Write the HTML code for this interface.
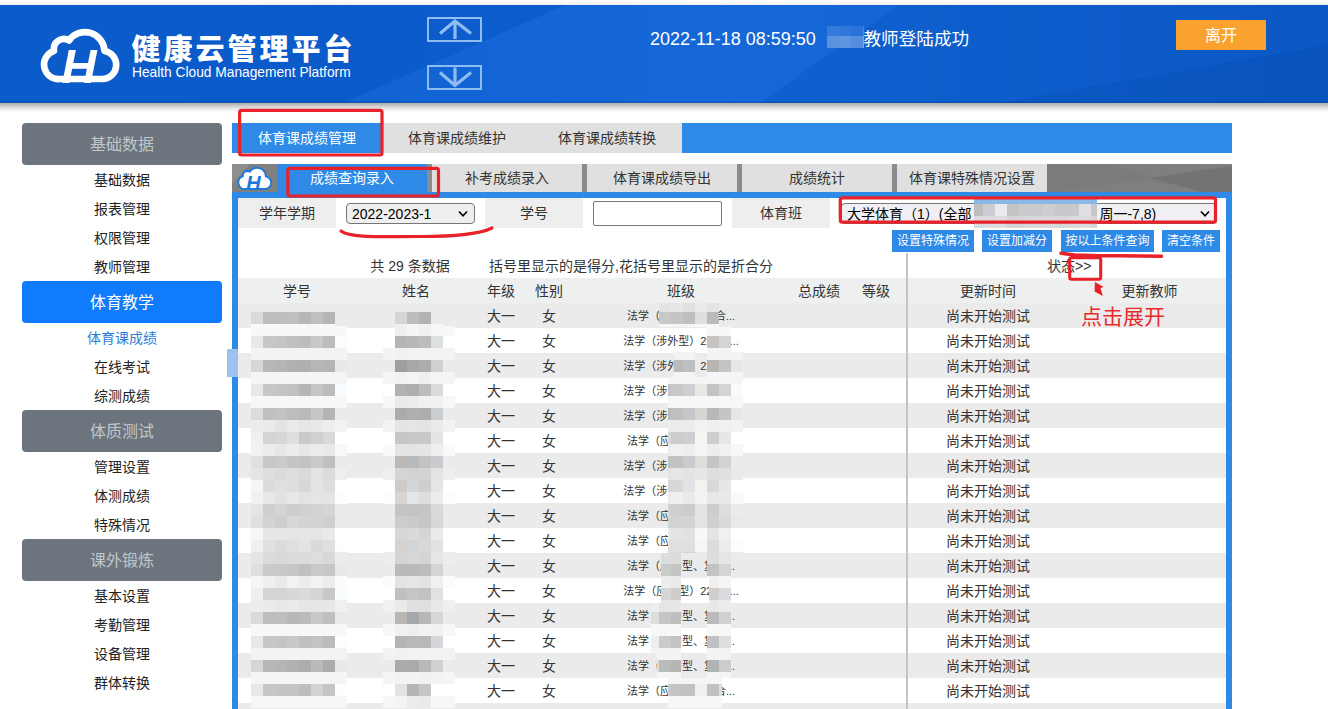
<!DOCTYPE html>
<html lang="zh-CN"><head><meta charset="utf-8"><title>健康云管理平台</title>
<style>
html,body{margin:0;padding:0;background:#fff}
body{width:1328px;height:709px;overflow:hidden;position:relative;font-family:"Liberation Sans","Noto Sans CJK SC",sans-serif;font-size:14px;color:#333;line-height:1}
.abs{position:absolute}
#hdr{position:absolute;left:-12px;top:5px;width:1352px;padding:0;height:98px;background:linear-gradient(90deg,#0e5ecf 0%,#0d5ccc 25.5%,#1466d6 55%,#0f5fce 80%,#0a55c2 100%);box-shadow:0 3px 7px rgba(0,0,0,.4),inset 0 -1.5px 0 #0a4ea6;overflow:hidden}
#hin{position:absolute;left:12px;top:0;width:1328px;height:98px}
#hdr svg.bg{position:absolute;left:0;top:0}
#logo{position:absolute;left:0;top:0}
#title{position:absolute;left:131.5px;top:28px;font-size:29px;font-weight:900;letter-spacing:3px;color:#fff;white-space:nowrap;line-height:34px}
#sub{position:absolute;left:132px;top:59px;font-size:13.75px;color:#fff;white-space:nowrap;line-height:18px}
.arrow{position:absolute;left:427px;width:51px;height:21px;border:2px solid #8fbdf3}
#msg{position:absolute;left:650px;top:22px;font-size:17.6px;color:#fff;white-space:nowrap;line-height:24px}
#leave{position:absolute;left:1176px;top:15px;width:90px;height:30px;background:#fba12f;color:#fff;font-size:16px;text-align:center;line-height:31px;overflow:hidden}
/* sidebar */
.sb{position:absolute;left:22px;width:200px;height:42px;border-radius:4px;background:#6c757d;color:#c2c6ca;font-size:16px;text-align:center;line-height:44px;overflow:hidden}
.sb.on{background:#107bfd;color:#fff}
.si{position:absolute;left:22px;width:200px;height:29px;text-align:center;line-height:31px;overflow:hidden;font-size:14px;color:#222}
.si.on{color:#2f7bd9}
/* tabs */
#t1{position:absolute;left:232px;top:123px;width:1000px;height:30px;background:#2e8ae6}
#t1 div{position:absolute;top:0;height:30px;width:150px;text-align:center;line-height:30px;font-size:14px;color:#333;background:#e0e0e0}
#t1 div.on{background:#2e8ae6;color:#fff}
#t2{position:absolute;left:232px;top:164px;width:1000px;height:29px;background:#777}
#t2 div.t{position:absolute;top:0;height:29px;width:150px;text-align:center;line-height:29px;font-size:14px;color:#333;background:#e0e0e0;border-right:5px solid #8c8c8c}
#t2 div.t.on{background:#2e8ae6;color:#fff}
#frame{position:absolute;left:232px;top:192px;width:988px;height:600px;border:6px solid #2e8ae6;border-top-width:6px;background:#fff}
.fl{position:absolute;top:198px;height:30px;background:#eee;text-align:center;line-height:30px;font-size:14px;color:#333}
.sel{position:absolute;box-sizing:border-box;border:1px solid #767676;border-radius:4px;background:#efefef;font-size:14px;color:#000;white-space:nowrap;overflow:hidden}
.btn{position:absolute;top:230px;height:22px;background:#2e8ae6;color:#fff;font-size:12px;text-align:center;line-height:22px;white-space:nowrap}
.row{position:absolute;left:238px;width:988px;height:25px}
.row.g{background:#ebebeb}
.row.h{background:#eeefef}
.row.h span{line-height:27px}
.row.d span{line-height:27px;overflow:hidden}
.row span{position:absolute;top:0;height:25px;line-height:25px;text-align:center;white-space:nowrap;font-size:14px;color:#333}
.row span.c{font-size:11px;overflow:hidden}
#vline{position:absolute;left:906px;top:253px;width:2px;height:460px;background:#c4c4c4}
</style></head><body>
<div id="hdr"><div id="hin">
<svg class="bg" width="1328" height="98" viewBox="0 0 1328 98">
<polygon points="0,0 565,0 343,98 0,98" fill="#0b59c8" opacity=".55"/>
<polygon points="343,98 565,0 600,0 620,98" fill="#1b6cdc" opacity=".35"/>
<polygon points="600,0 900,0 760,98 620,98" fill="#1767d8" opacity=".5"/>
<polygon points="900,0 1328,0 1328,40 1000,98 760,98" fill="#0c5ac8" opacity=".5"/>
<polygon points="1328,40 1328,98 1000,98" fill="#084fb8" opacity=".5"/>
</svg>
<svg id="logo" width="140" height="98" viewBox="0 5 140 98">
<path d="M60 79 A14.5 14.5 0 0 1 54 50.8 A10 10 0 0 1 69 40.5 A19.5 19.5 0 0 1 104.5 51 A14.1 14.1 0 0 1 102 79 Z" fill="none" stroke="#fff" stroke-width="6.6" stroke-linejoin="round"/>
<text x="61.5" y="82.8" font-family="Liberation Sans, sans-serif" font-size="48.5" font-weight="bold" font-style="italic" fill="#fff">H</text>
</svg>
<div id="title">健康云管理平台</div>
<div id="sub">Health Cloud Management Platform</div>
<div class="arrow" style="top:12px"><svg width="51" height="21" viewBox="0 0 51 21"><path d="M11 14.5 L26 2 L42 14.5 M26 2.5 V20" fill="none" stroke="#8fbdf3" stroke-width="3.2"/></svg></div>
<div class="arrow" style="top:60px"><svg width="51" height="21" viewBox="0 0 51 21"><path d="M11 5.5 L26 18.5 L42 5.5 M26 18 V0.5" fill="none" stroke="#8fbdf3" stroke-width="3.2"/></svg></div>
<div id="msg"><span style="font-size:18px">2022-11-18 08:59:50</span></div>
<div id="msg2" class="abs" style="left:863.5px;top:22px;font-size:17.6px;color:#fff;white-space:nowrap;line-height:24px">教师登陆成功</div>
<div id="leave">离开</div>
</div></div>
<div class="sb" style="top:123px">基础数据</div>
<div class="si" style="top:165px">基础数据</div>
<div class="si" style="top:194px">报表管理</div>
<div class="si" style="top:223px">权限管理</div>
<div class="si" style="top:252px">教师管理</div>
<div class="sb on" style="top:281px">体育教学</div>
<div class="si on" style="top:323px">体育课成绩</div>
<div class="si" style="top:352px">在线考试</div>
<div class="si" style="top:381px">综测成绩</div>
<div class="sb" style="top:410px">体质测试</div>
<div class="si" style="top:452px">管理设置</div>
<div class="si" style="top:481px">体测成绩</div>
<div class="si" style="top:510px">特殊情况</div>
<div class="sb" style="top:539px">课外锻炼</div>
<div class="si" style="top:581px">基本设置</div>
<div class="si" style="top:610px">考勤管理</div>
<div class="si" style="top:639px">设备管理</div>
<div class="si" style="top:668px">群体转换</div>
<div id="t1"><div class="on" style="left:0">体育课成绩管理</div><div style="left:150px">体育课成绩维护</div><div style="left:300px">体育课成绩转换</div></div>
<div id="t2"><svg class="abs" style="left:815px;top:0" width="185" height="29" viewBox="0 0 185 29"><rect width="185" height="29" fill="#7f7f7f"/><polygon points="0,0 60,0 110,14 0,29" fill="#7b7b7b"/><polygon points="102,14 185,2 185,29 160,29" fill="#737373"/></svg><svg class="abs" style="left:0;top:0" width="45" height="29" viewBox="0 0 45 29"><rect width="45" height="29" fill="#808080"/><polygon points="0,0 18,0 0,20" fill="#8e8e8e"/>
<path transform="translate(6,3.4) scale(0.455) translate(-43.3,-31.3)" d="M60 79 A14.5 14.5 0 0 1 54 50.8 A10 10 0 0 1 69 40.5 A19.5 19.5 0 0 1 104.5 51 A14.1 14.1 0 0 1 102 79 Z" fill="#fff" stroke="#1f78d8" stroke-width="4.4" stroke-linejoin="round"/>
<text x="14.3" y="26.2" font-family="Liberation Sans, sans-serif" font-size="20" font-weight="bold" font-style="italic" fill="#1f78d8">H</text></svg><div class="t on" style="left:45px;">成绩查询录入</div><div class="t" style="left:200px;">补考成绩录入</div><div class="t" style="left:355px;">体育课成绩导出</div><div class="t" style="left:510px;">成绩统计</div><div class="t" style="left:665px;border-right:0;">体育课特殊情况设置</div></div>
<div id="frame"></div>
<div class="abs" style="left:227px;top:349px;width:11px;height:28px;background:#9cc3ee"></div>
<div class="fl" style="left:238px;width:98px">学年学期</div>
<div class="fl" style="left:485px;width:98px">学号</div>
<div class="fl" style="left:732px;width:98px">体育班</div>
<div class="sel" style="left:346px;top:203px;width:129px;height:21px;line-height:21px;padding-left:5px">2022-2023-1<svg class="abs" style="right:6px;top:6px" width="10" height="8" viewBox="0 0 10 8"><path d="M1 1.5 L5 5.8 L9 1.5" fill="none" stroke="#000" stroke-width="1.6"/></svg></div>
<div class="abs" style="left:593px;top:201px;width:127px;height:23px;border:1px solid #767676;border-radius:2px;background:#fff"></div>
<div class="sel" style="left:841px;top:203px;width:376px;height:21px;line-height:21px;padding-left:5px;background:#f0f0f4">大学体育（1）(全部<span style="display:inline-block;width:128px;overflow:hidden;vertical-align:top;color:#555"></span>周一-7,8)<svg class="abs" style="right:6px;top:6px" width="10" height="8" viewBox="0 0 10 8"><path d="M1 1.5 L5 5.8 L9 1.5" fill="none" stroke="#000" stroke-width="1.6"/></svg></div>
<div class="btn" style="left:892px;width:82px">设置特殊情况</div>
<div class="btn" style="left:982px;width:70px">设置加减分</div>
<div class="btn" style="left:1061px;width:93px">按以上条件查询</div>
<div class="btn" style="left:1162px;width:58px">清空条件</div>
<div class="abs" style="left:330px;top:254px;width:160px;height:25px;line-height:25px;text-align:center;white-space:nowrap">共 29 条数据</div>
<div class="abs" style="left:489px;top:254px;height:25px;line-height:25px;white-space:nowrap">括号里显示的是得分,花括号里显示的是折合分</div>
<div class="abs" style="left:1047px;top:254px;height:25px;line-height:25px;white-space:nowrap;font-size:14px">状态&gt;&gt;</div>
<div class="row h" style="top:278px"><span style="left:0px;width:118px">学号</span><span style="left:118px;width:120px">姓名</span><span style="left:238px;width:50px">年级</span><span style="left:288px;width:46px">性别</span><span style="left:334px;width:218px">班级</span><span style="left:552px;width:58px">总成绩</span><span style="left:610px;width:56px">等级</span><span style="left:670px;width:160px">更新时间</span><span style="left:830px;width:163px">更新教师</span></div>
<div class="row g d" style="top:303px"><span style="left:238px;width:50px">大一</span><span style="left:288px;width:46px">女</span><span class="c" style="left:334px;width:218px">法学（涉外型、复合...</span><span style="left:670px;width:160px">尚未开始测试</span></div>
<div class="row d" style="top:328px"><span style="left:238px;width:50px">大一</span><span style="left:288px;width:46px">女</span><span class="c" style="left:334px;width:218px">法学（涉外型）22级1...</span><span style="left:670px;width:160px">尚未开始测试</span></div>
<div class="row g d" style="top:353px"><span style="left:238px;width:50px">大一</span><span style="left:288px;width:46px">女</span><span class="c" style="left:334px;width:218px">法学（涉外型）22级1...</span><span style="left:670px;width:160px">尚未开始测试</span></div>
<div class="row d" style="top:378px"><span style="left:238px;width:50px">大一</span><span style="left:288px;width:46px">女</span><span class="c" style="left:334px;width:218px">法学（涉外型）22级1...</span><span style="left:670px;width:160px">尚未开始测试</span></div>
<div class="row g d" style="top:403px"><span style="left:238px;width:50px">大一</span><span style="left:288px;width:46px">女</span><span class="c" style="left:334px;width:218px">法学（涉外型）22级1...</span><span style="left:670px;width:160px">尚未开始测试</span></div>
<div class="row d" style="top:428px"><span style="left:238px;width:50px">大一</span><span style="left:288px;width:46px">女</span><span class="c" style="left:334px;width:218px">法学（应用型、复合...</span><span style="left:670px;width:160px">尚未开始测试</span></div>
<div class="row g d" style="top:453px"><span style="left:238px;width:50px">大一</span><span style="left:288px;width:46px">女</span><span class="c" style="left:334px;width:218px">法学（涉外型）22级1...</span><span style="left:670px;width:160px">尚未开始测试</span></div>
<div class="row d" style="top:478px"><span style="left:238px;width:50px">大一</span><span style="left:288px;width:46px">女</span><span class="c" style="left:334px;width:218px">法学（涉外型）22级1...</span><span style="left:670px;width:160px">尚未开始测试</span></div>
<div class="row g d" style="top:503px"><span style="left:238px;width:50px">大一</span><span style="left:288px;width:46px">女</span><span class="c" style="left:334px;width:218px">法学（应用型、复合...</span><span style="left:670px;width:160px">尚未开始测试</span></div>
<div class="row d" style="top:528px"><span style="left:238px;width:50px">大一</span><span style="left:288px;width:46px">女</span><span class="c" style="left:334px;width:218px">法学（应用型、复合...</span><span style="left:670px;width:160px">尚未开始测试</span></div>
<div class="row g d" style="top:553px"><span style="left:238px;width:50px">大一</span><span style="left:288px;width:46px">女</span><span class="c" style="left:334px;width:218px">法学（应用型、复合...</span><span style="left:670px;width:160px">尚未开始测试</span></div>
<div class="row d" style="top:578px"><span style="left:238px;width:50px">大一</span><span style="left:288px;width:46px">女</span><span class="c" style="left:334px;width:218px">法学（应用型）22级1...</span><span style="left:670px;width:160px">尚未开始测试</span></div>
<div class="row g d" style="top:603px"><span style="left:238px;width:50px">大一</span><span style="left:288px;width:46px">女</span><span class="c" style="left:334px;width:218px">法学（应用型、复合...</span><span style="left:670px;width:160px">尚未开始测试</span></div>
<div class="row d" style="top:628px"><span style="left:238px;width:50px">大一</span><span style="left:288px;width:46px">女</span><span class="c" style="left:334px;width:218px">法学（应用型、复合...</span><span style="left:670px;width:160px">尚未开始测试</span></div>
<div class="row g d" style="top:653px"><span style="left:238px;width:50px">大一</span><span style="left:288px;width:46px">女</span><span class="c" style="left:334px;width:218px">法学（应用型、复合...</span><span style="left:670px;width:160px">尚未开始测试</span></div>
<div class="row d" style="top:678px"><span style="left:238px;width:50px">大一</span><span style="left:288px;width:46px">女</span><span class="c" style="left:334px;width:218px">法学（应用型、复合...</span><span style="left:670px;width:160px">尚未开始测试</span></div>
<div class="row g d" style="top:703px"><span style="left:238px;width:50px">大一</span><span style="left:288px;width:46px">女</span><span class="c" style="left:334px;width:218px">法学（应用型、复合...</span><span style="left:670px;width:160px">尚未开始测试</span></div>
<div id="vline"></div>
<svg class="abs" style="left:0;top:0" width="1328" height="709" viewBox="0 0 1328 709" shape-rendering="crispEdges"><rect x="251" y="312" width="12" height="12" fill="#dbdad8"/><rect x="263" y="312" width="12" height="12" fill="#bdbdbd"/><rect x="275" y="312" width="12" height="12" fill="#bebebe"/><rect x="287" y="312" width="12" height="12" fill="#c0c0c0"/><rect x="299" y="312" width="12" height="12" fill="#b7b7b6"/><rect x="311" y="312" width="12" height="12" fill="#bec0c2"/><rect x="323" y="312" width="12" height="12" fill="#b7b5b4"/><rect x="251" y="324" width="84" height="12" fill="#f8f8f8"/><rect x="251" y="336" width="12" height="12" fill="#eae8e6"/><rect x="263" y="336" width="12" height="12" fill="#c6c7c7"/><rect x="275" y="336" width="12" height="12" fill="#c5c4c3"/><rect x="287" y="336" width="12" height="12" fill="#c1c0bf"/><rect x="299" y="336" width="12" height="12" fill="#bdbdbd"/><rect x="311" y="336" width="12" height="12" fill="#c7cacc"/><rect x="323" y="336" width="12" height="12" fill="#bebdbc"/><rect x="251" y="348" width="84" height="12" fill="#f3f3f3"/><rect x="251" y="360" width="12" height="12" fill="#d8d6d5"/><rect x="263" y="360" width="12" height="12" fill="#b7b8b8"/><rect x="275" y="360" width="12" height="12" fill="#b6b5b5"/><rect x="287" y="360" width="12" height="12" fill="#b1b0af"/><rect x="299" y="360" width="12" height="12" fill="#afafaf"/><rect x="311" y="360" width="12" height="12" fill="#b6b7ba"/><rect x="323" y="360" width="12" height="12" fill="#b5b4b3"/><rect x="251" y="372" width="84" height="12" fill="#f5f5f5"/><rect x="251" y="384" width="12" height="12" fill="#eae8e6"/><rect x="263" y="384" width="12" height="12" fill="#c6c7c7"/><rect x="275" y="384" width="12" height="12" fill="#c5c4c3"/><rect x="287" y="384" width="12" height="12" fill="#c1c1c0"/><rect x="299" y="384" width="12" height="12" fill="#b6b6b6"/><rect x="311" y="384" width="12" height="12" fill="#c4c6c7"/><rect x="323" y="384" width="12" height="12" fill="#bcbbb9"/><rect x="251" y="396" width="84" height="12" fill="#f7f7f7"/><rect x="251" y="408" width="12" height="12" fill="#dddcdb"/><rect x="263" y="408" width="12" height="12" fill="#bfc0c0"/><rect x="275" y="408" width="12" height="12" fill="#c4c3c3"/><rect x="287" y="408" width="12" height="12" fill="#bdbdbe"/><rect x="299" y="408" width="12" height="12" fill="#bbbab8"/><rect x="311" y="408" width="12" height="12" fill="#c5c7c8"/><rect x="323" y="408" width="12" height="12" fill="#b3b4b5"/><rect x="251" y="420" width="12" height="12" fill="#edecec"/><rect x="263" y="420" width="12" height="12" fill="#eaeaea"/><rect x="275" y="420" width="12" height="12" fill="#e4e4e4"/><rect x="287" y="420" width="12" height="12" fill="#eaeaea"/><rect x="299" y="420" width="12" height="12" fill="#e6e6e7"/><rect x="311" y="420" width="12" height="12" fill="#e9e9e8"/><rect x="323" y="420" width="12" height="12" fill="#eceded"/><rect x="251" y="432" width="12" height="12" fill="#f2f0ef"/><rect x="263" y="432" width="12" height="12" fill="#d4d4d5"/><rect x="275" y="432" width="12" height="12" fill="#d8d6d5"/><rect x="287" y="432" width="12" height="12" fill="#dedede"/><rect x="299" y="432" width="12" height="12" fill="#cacac9"/><rect x="311" y="432" width="12" height="12" fill="#ced0d2"/><rect x="323" y="432" width="12" height="12" fill="#d8d9da"/><rect x="251" y="444" width="12" height="12" fill="#f2f2f1"/><rect x="263" y="444" width="12" height="12" fill="#ececec"/><rect x="275" y="444" width="12" height="12" fill="#e7e7e8"/><rect x="287" y="444" width="12" height="12" fill="#ececeb"/><rect x="299" y="444" width="12" height="12" fill="#e7e7e8"/><rect x="311" y="444" width="12" height="12" fill="#ececec"/><rect x="323" y="444" width="12" height="12" fill="#e9e9e9"/><rect x="251" y="456" width="12" height="12" fill="#e1e0de"/><rect x="263" y="456" width="12" height="12" fill="#c7c8c9"/><rect x="275" y="456" width="12" height="12" fill="#cbcac9"/><rect x="287" y="456" width="12" height="12" fill="#c5c5c5"/><rect x="299" y="456" width="12" height="12" fill="#c3c3c2"/><rect x="311" y="456" width="12" height="12" fill="#cacacb"/><rect x="323" y="456" width="12" height="12" fill="#bfbfbf"/><rect x="251" y="468" width="12" height="12" fill="#e6e5e5"/><rect x="263" y="468" width="12" height="12" fill="#dedede"/><rect x="275" y="468" width="12" height="12" fill="#dadada"/><rect x="287" y="468" width="12" height="12" fill="#dedede"/><rect x="299" y="468" width="12" height="12" fill="#dadada"/><rect x="311" y="468" width="12" height="12" fill="#e2e3e3"/><rect x="323" y="468" width="12" height="12" fill="#dcdbdb"/><rect x="251" y="480" width="12" height="12" fill="#f6f5f3"/><rect x="263" y="480" width="12" height="12" fill="#dbdcdd"/><rect x="275" y="480" width="12" height="12" fill="#e1e0df"/><rect x="287" y="480" width="12" height="12" fill="#dcddde"/><rect x="299" y="480" width="12" height="12" fill="#d9d8d7"/><rect x="311" y="480" width="12" height="12" fill="#e3e5e5"/><rect x="323" y="480" width="12" height="12" fill="#dddede"/><rect x="251" y="492" width="12" height="12" fill="#f1f1f0"/><rect x="263" y="492" width="12" height="12" fill="#e8e8e7"/><rect x="275" y="492" width="12" height="12" fill="#e1e1e2"/><rect x="287" y="492" width="12" height="12" fill="#e8e8e7"/><rect x="299" y="492" width="12" height="12" fill="#e4e3e3"/><rect x="311" y="492" width="12" height="12" fill="#e4e5e6"/><rect x="323" y="492" width="12" height="12" fill="#e4e4e4"/><rect x="251" y="504" width="12" height="12" fill="#e5e5e4"/><rect x="263" y="504" width="12" height="12" fill="#cecfcf"/><rect x="275" y="504" width="12" height="12" fill="#d5d4d3"/><rect x="287" y="504" width="12" height="12" fill="#cdcdcd"/><rect x="299" y="504" width="12" height="12" fill="#d2d0cf"/><rect x="311" y="504" width="12" height="12" fill="#d2d3d4"/><rect x="323" y="504" width="12" height="12" fill="#d4d5d5"/><rect x="251" y="516" width="12" height="12" fill="#e0dfde"/><rect x="263" y="516" width="12" height="12" fill="#d2d3d3"/><rect x="275" y="516" width="12" height="12" fill="#cececd"/><rect x="287" y="516" width="12" height="12" fill="#d7d8d9"/><rect x="299" y="516" width="12" height="12" fill="#d6d4d2"/><rect x="311" y="516" width="12" height="12" fill="#d1d2d3"/><rect x="323" y="516" width="12" height="12" fill="#cfcfd0"/><rect x="251" y="528" width="12" height="12" fill="#f8f7f6"/><rect x="263" y="528" width="12" height="12" fill="#e6e6e6"/><rect x="275" y="528" width="12" height="12" fill="#e8e7e7"/><rect x="287" y="528" width="12" height="12" fill="#e5e5e6"/><rect x="299" y="528" width="12" height="12" fill="#e6e6e6"/><rect x="311" y="528" width="12" height="12" fill="#e4e5e5"/><rect x="323" y="528" width="12" height="12" fill="#e9e9ea"/><rect x="251" y="540" width="12" height="12" fill="#f1f0ef"/><rect x="263" y="540" width="12" height="12" fill="#dfe0e0"/><rect x="275" y="540" width="12" height="12" fill="#dcdbdb"/><rect x="287" y="540" width="12" height="12" fill="#e1e0e0"/><rect x="299" y="540" width="12" height="12" fill="#e2e4e5"/><rect x="311" y="540" width="12" height="12" fill="#dadad9"/><rect x="323" y="540" width="12" height="12" fill="#dfdfdf"/><rect x="251" y="552" width="12" height="12" fill="#e6e5e5"/><rect x="263" y="552" width="12" height="12" fill="#dbdbdb"/><rect x="275" y="552" width="12" height="12" fill="#d9d9d9"/><rect x="287" y="552" width="12" height="12" fill="#dbdbdb"/><rect x="299" y="552" width="12" height="12" fill="#dbdcdd"/><rect x="311" y="552" width="12" height="12" fill="#dddddd"/><rect x="323" y="552" width="12" height="12" fill="#d8d8d8"/><rect x="251" y="564" width="12" height="12" fill="#dfdedc"/><rect x="263" y="564" width="12" height="12" fill="#c9caca"/><rect x="275" y="564" width="12" height="12" fill="#cac9c9"/><rect x="287" y="564" width="12" height="12" fill="#c7c6c6"/><rect x="299" y="564" width="12" height="12" fill="#c1c0bf"/><rect x="311" y="564" width="12" height="12" fill="#c9cacb"/><rect x="323" y="564" width="12" height="12" fill="#c8c6c6"/><rect x="251" y="576" width="12" height="12" fill="#f6f5f4"/><rect x="263" y="576" width="12" height="12" fill="#eeefef"/><rect x="275" y="576" width="12" height="12" fill="#ebeaea"/><rect x="287" y="576" width="12" height="12" fill="#f2f2f2"/><rect x="299" y="576" width="12" height="12" fill="#ebecec"/><rect x="311" y="576" width="12" height="12" fill="#f2f2f2"/><rect x="323" y="576" width="12" height="12" fill="#edecec"/><rect x="251" y="588" width="12" height="12" fill="#f0efee"/><rect x="263" y="588" width="12" height="12" fill="#d3d4d4"/><rect x="275" y="588" width="12" height="12" fill="#d6d5d5"/><rect x="287" y="588" width="12" height="12" fill="#d6d8d9"/><rect x="299" y="588" width="12" height="12" fill="#dbdbdb"/><rect x="311" y="588" width="12" height="12" fill="#d5d4d3"/><rect x="323" y="588" width="12" height="12" fill="#c9c8c8"/><rect x="251" y="600" width="12" height="12" fill="#ededec"/><rect x="263" y="600" width="12" height="12" fill="#eaebeb"/><rect x="275" y="600" width="12" height="12" fill="#e8e8e8"/><rect x="287" y="600" width="12" height="12" fill="#eaeaea"/><rect x="299" y="600" width="12" height="12" fill="#e5e6e6"/><rect x="311" y="600" width="12" height="12" fill="#e6e6e5"/><rect x="323" y="600" width="12" height="12" fill="#e6e7e7"/><rect x="251" y="612" width="12" height="12" fill="#dbdad8"/><rect x="263" y="612" width="12" height="12" fill="#bdbdbd"/><rect x="275" y="612" width="12" height="12" fill="#bebebe"/><rect x="287" y="612" width="12" height="12" fill="#b8b8b8"/><rect x="299" y="612" width="12" height="12" fill="#bcbbba"/><rect x="311" y="612" width="12" height="12" fill="#c7c9cb"/><rect x="323" y="612" width="12" height="12" fill="#bfbfbf"/><rect x="251" y="624" width="84" height="12" fill="#f8f8f8"/><rect x="251" y="636" width="12" height="12" fill="#eae8e6"/><rect x="263" y="636" width="12" height="12" fill="#c6c7c7"/><rect x="275" y="636" width="12" height="12" fill="#c5c4c3"/><rect x="287" y="636" width="12" height="12" fill="#c9c9ca"/><rect x="299" y="636" width="12" height="12" fill="#c0c0bf"/><rect x="311" y="636" width="12" height="12" fill="#c3c3c3"/><rect x="323" y="636" width="12" height="12" fill="#bbbbbb"/><rect x="251" y="648" width="84" height="12" fill="#f3f3f3"/><rect x="251" y="660" width="12" height="12" fill="#d8d6d5"/><rect x="263" y="660" width="12" height="12" fill="#b7b8b8"/><rect x="275" y="660" width="12" height="12" fill="#b6b5b5"/><rect x="287" y="660" width="12" height="12" fill="#b2b1b0"/><rect x="299" y="660" width="12" height="12" fill="#acadaf"/><rect x="311" y="660" width="12" height="12" fill="#babab9"/><rect x="323" y="660" width="12" height="12" fill="#adacac"/><rect x="251" y="672" width="84" height="12" fill="#f5f5f5"/><rect x="251" y="684" width="12" height="12" fill="#eae8e6"/><rect x="263" y="684" width="12" height="12" fill="#c6c7c7"/><rect x="275" y="684" width="12" height="12" fill="#c5c4c3"/><rect x="287" y="684" width="12" height="12" fill="#c3c4c5"/><rect x="299" y="684" width="12" height="12" fill="#bfbebe"/><rect x="311" y="684" width="12" height="12" fill="#d2d3d3"/><rect x="323" y="684" width="12" height="12" fill="#c4c5c5"/><rect x="251" y="696" width="84" height="12" fill="#f7f7f7"/><rect x="251" y="708" width="84" height="1" fill="#ebebeb"/><rect x="335" y="326" width="12" height="10" fill="#f8f8f8"/><rect x="335" y="336" width="12" height="12" fill="#fbfdfe"/><rect x="335" y="348" width="12" height="12" fill="#f3f3f3"/><rect x="335" y="360" width="12" height="12" fill="#e7e9eb"/><rect x="335" y="372" width="12" height="12" fill="#f5f5f5"/><rect x="335" y="384" width="12" height="12" fill="#f8fcfe"/><rect x="335" y="396" width="12" height="12" fill="#f7f7f7"/><rect x="335" y="408" width="12" height="12" fill="#eaeaeb"/><rect x="335" y="420" width="12" height="12" fill="#f2f2f2"/><rect x="335" y="432" width="12" height="12" fill="#ffffff"/><rect x="335" y="444" width="12" height="12" fill="#f9f9fa"/><rect x="335" y="456" width="12" height="12" fill="#e8eaeb"/><rect x="335" y="468" width="12" height="12" fill="#edeeee"/><rect x="335" y="480" width="12" height="12" fill="#ffffff"/><rect x="335" y="492" width="12" height="12" fill="#fcfdfd"/><rect x="335" y="504" width="12" height="12" fill="#ebebeb"/><rect x="335" y="516" width="12" height="12" fill="#ebebeb"/><rect x="335" y="528" width="12" height="12" fill="#ffffff"/><rect x="335" y="540" width="12" height="12" fill="#fefeff"/><rect x="335" y="552" width="12" height="12" fill="#ececed"/><rect x="335" y="564" width="12" height="12" fill="#e7e9ea"/><rect x="335" y="576" width="12" height="12" fill="#fbfcfc"/><rect x="335" y="588" width="12" height="12" fill="#fafdfe"/><rect x="335" y="600" width="12" height="12" fill="#f0f0f0"/><rect x="335" y="612" width="12" height="12" fill="#e9eaeb"/><rect x="335" y="624" width="12" height="12" fill="#f8f8f8"/><rect x="335" y="636" width="12" height="12" fill="#fbfdfe"/><rect x="335" y="648" width="12" height="12" fill="#f3f3f3"/><rect x="335" y="660" width="12" height="12" fill="#e7e9eb"/><rect x="335" y="672" width="12" height="12" fill="#f5f5f5"/><rect x="335" y="684" width="12" height="12" fill="#fcfeff"/><rect x="335" y="696" width="12" height="12" fill="#f7f7f7"/><rect x="335" y="708" width="12" height="1" fill="#ebebeb"/><rect x="395" y="312" width="12" height="12" fill="#d6d5d5"/><rect x="407" y="312" width="12" height="12" fill="#bcbcbb"/><rect x="419" y="312" width="12" height="12" fill="#b2b3b4"/><rect x="431" y="312" width="12" height="12" fill="#ebebeb"/><rect x="395" y="324" width="12" height="12" fill="#f1f0f0"/><rect x="407" y="324" width="12" height="12" fill="#f5f5f5"/><rect x="419" y="324" width="12" height="12" fill="#f0f0ef"/><rect x="431" y="324" width="12" height="12" fill="#f6f7f7"/><rect x="395" y="336" width="12" height="12" fill="#b6b4b2"/><rect x="407" y="336" width="12" height="12" fill="#b8b8b8"/><rect x="419" y="336" width="12" height="12" fill="#bdbcbb"/><rect x="431" y="336" width="12" height="12" fill="#dce0e1"/><rect x="395" y="348" width="12" height="12" fill="#f1f1f1"/><rect x="407" y="348" width="24" height="12" fill="#f2f2f2"/><rect x="431" y="348" width="12" height="12" fill="#f3f3f3"/><rect x="395" y="360" width="12" height="12" fill="#a09d9b"/><rect x="407" y="360" width="12" height="12" fill="#a8a8a8"/><rect x="419" y="360" width="12" height="12" fill="#adadad"/><rect x="431" y="360" width="12" height="12" fill="#ced0d2"/><rect x="395" y="372" width="12" height="12" fill="#f2f2f2"/><rect x="407" y="372" width="12" height="12" fill="#f4f4f3"/><rect x="419" y="372" width="12" height="12" fill="#efefef"/><rect x="431" y="372" width="12" height="12" fill="#f5f5f5"/><rect x="395" y="384" width="12" height="12" fill="#b4b2b1"/><rect x="407" y="384" width="12" height="12" fill="#afaeaf"/><rect x="419" y="384" width="12" height="12" fill="#bebdbd"/><rect x="431" y="384" width="12" height="12" fill="#d9dbdd"/><rect x="395" y="396" width="12" height="12" fill="#eaeaea"/><rect x="407" y="396" width="12" height="12" fill="#eeeded"/><rect x="419" y="396" width="24" height="12" fill="#f1f1f1"/><rect x="395" y="408" width="12" height="12" fill="#adaba9"/><rect x="407" y="408" width="12" height="12" fill="#aeafb0"/><rect x="419" y="408" width="12" height="12" fill="#aeadac"/><rect x="431" y="408" width="12" height="12" fill="#cacdcf"/><rect x="395" y="420" width="12" height="12" fill="#e4e4e3"/><rect x="407" y="420" width="12" height="12" fill="#e5e5e6"/><rect x="419" y="420" width="12" height="12" fill="#e4e4e4"/><rect x="431" y="420" width="12" height="12" fill="#eaeaeb"/><rect x="395" y="432" width="12" height="12" fill="#c8c7c6"/><rect x="407" y="432" width="12" height="12" fill="#cac8c7"/><rect x="419" y="432" width="12" height="12" fill="#c8c8c9"/><rect x="431" y="432" width="12" height="12" fill="#e2e4e6"/><rect x="395" y="444" width="12" height="12" fill="#e6e5e4"/><rect x="407" y="444" width="12" height="12" fill="#e4e4e5"/><rect x="419" y="444" width="12" height="12" fill="#e5e5e5"/><rect x="431" y="444" width="12" height="12" fill="#eeefef"/><rect x="395" y="456" width="12" height="12" fill="#bbb8b6"/><rect x="407" y="456" width="12" height="12" fill="#b9babb"/><rect x="419" y="456" width="12" height="12" fill="#c3c3c3"/><rect x="431" y="456" width="12" height="12" fill="#cacbce"/><rect x="395" y="468" width="12" height="12" fill="#d7d5d3"/><rect x="407" y="468" width="12" height="12" fill="#d2d2d4"/><rect x="419" y="468" width="12" height="12" fill="#d4d3d2"/><rect x="431" y="468" width="12" height="12" fill="#e2e3e4"/><rect x="395" y="480" width="12" height="12" fill="#cfcbc9"/><rect x="407" y="480" width="12" height="12" fill="#d4d7d9"/><rect x="419" y="480" width="12" height="12" fill="#cfcfce"/><rect x="431" y="480" width="12" height="12" fill="#e5e5e6"/><rect x="395" y="492" width="12" height="12" fill="#d8d5d3"/><rect x="407" y="492" width="12" height="12" fill="#e3e5e6"/><rect x="419" y="492" width="12" height="12" fill="#dddedd"/><rect x="431" y="492" width="12" height="12" fill="#ebecec"/><rect x="395" y="504" width="12" height="12" fill="#c4c4c3"/><rect x="407" y="504" width="12" height="12" fill="#c5c4c4"/><rect x="419" y="504" width="12" height="12" fill="#c5c5c6"/><rect x="431" y="504" width="12" height="12" fill="#d7d9da"/><rect x="395" y="516" width="12" height="12" fill="#cdcccb"/><rect x="407" y="516" width="12" height="12" fill="#cbcaca"/><rect x="419" y="516" width="12" height="12" fill="#c6c6c6"/><rect x="431" y="516" width="12" height="12" fill="#d7d8d9"/><rect x="395" y="528" width="12" height="12" fill="#d7d7d6"/><rect x="407" y="528" width="12" height="12" fill="#dcdad8"/><rect x="419" y="528" width="12" height="12" fill="#d4d5d6"/><rect x="431" y="528" width="12" height="12" fill="#eaebed"/><rect x="395" y="540" width="12" height="12" fill="#d5d2cf"/><rect x="407" y="540" width="12" height="12" fill="#d3d4d5"/><rect x="419" y="540" width="12" height="12" fill="#d8d8d8"/><rect x="431" y="540" width="12" height="12" fill="#e1e2e4"/><rect x="395" y="552" width="12" height="12" fill="#d5d4d3"/><rect x="407" y="552" width="12" height="12" fill="#d7d7d8"/><rect x="419" y="552" width="12" height="12" fill="#d5d4d4"/><rect x="431" y="552" width="12" height="12" fill="#e4e5e5"/><rect x="395" y="564" width="12" height="12" fill="#bab9b7"/><rect x="407" y="564" width="12" height="12" fill="#bababa"/><rect x="419" y="564" width="12" height="12" fill="#bdbcbb"/><rect x="431" y="564" width="12" height="12" fill="#d3d5d7"/><rect x="395" y="576" width="12" height="12" fill="#e5e3e2"/><rect x="407" y="576" width="12" height="12" fill="#e5e6e7"/><rect x="419" y="576" width="12" height="12" fill="#e3e3e2"/><rect x="431" y="576" width="12" height="12" fill="#eff0f1"/><rect x="395" y="588" width="12" height="12" fill="#c2c0be"/><rect x="407" y="588" width="12" height="12" fill="#c5c6c8"/><rect x="419" y="588" width="12" height="12" fill="#c3c2c2"/><rect x="431" y="588" width="12" height="12" fill="#e0e1e2"/><rect x="395" y="600" width="12" height="12" fill="#ebeaea"/><rect x="407" y="600" width="12" height="12" fill="#dfdfe0"/><rect x="419" y="600" width="12" height="12" fill="#dfdfdf"/><rect x="431" y="600" width="12" height="12" fill="#e9e9ea"/><rect x="395" y="612" width="12" height="12" fill="#bab6b2"/><rect x="407" y="612" width="12" height="12" fill="#a6a8ac"/><rect x="419" y="612" width="12" height="12" fill="#b9b7b6"/><rect x="431" y="612" width="12" height="12" fill="#d5d7d8"/><rect x="395" y="624" width="12" height="12" fill="#f1f0f0"/><rect x="407" y="624" width="12" height="12" fill="#eeeeee"/><rect x="419" y="624" width="12" height="12" fill="#f2f2f3"/><rect x="431" y="624" width="12" height="12" fill="#f1f1f2"/><rect x="395" y="636" width="12" height="12" fill="#b6b4b2"/><rect x="407" y="636" width="12" height="12" fill="#bab9b8"/><rect x="419" y="636" width="12" height="12" fill="#b8b8b7"/><rect x="431" y="636" width="12" height="12" fill="#d4d6da"/><rect x="395" y="648" width="12" height="12" fill="#f2f1f2"/><rect x="407" y="648" width="12" height="12" fill="#f2f2f2"/><rect x="419" y="648" width="12" height="12" fill="#f3f3f3"/><rect x="431" y="648" width="12" height="12" fill="#f2f2f2"/><rect x="395" y="660" width="12" height="12" fill="#abaaa8"/><rect x="407" y="660" width="12" height="12" fill="#aaaaaa"/><rect x="419" y="660" width="12" height="12" fill="#b7b9ba"/><rect x="431" y="660" width="12" height="12" fill="#d0d0d1"/><rect x="395" y="672" width="24" height="12" fill="#f3f3f3"/><rect x="419" y="672" width="12" height="12" fill="#f2f1f1"/><rect x="431" y="672" width="12" height="12" fill="#f2f3f3"/><rect x="395" y="684" width="12" height="12" fill="#e5e3e1"/><rect x="407" y="684" width="12" height="12" fill="#b5b5b5"/><rect x="419" y="684" width="12" height="12" fill="#c3c5c7"/><rect x="431" y="684" width="12" height="12" fill="#ffffff"/><rect x="395" y="696" width="12" height="12" fill="#f4f4f4"/><rect x="407" y="696" width="12" height="12" fill="#ececec"/><rect x="419" y="696" width="12" height="12" fill="#eaeaea"/><rect x="431" y="696" width="12" height="12" fill="#f7f7f7"/><rect x="395" y="708" width="48" height="1" fill="#ebebeb"/><rect x="443" y="326" width="12" height="10" fill="#f8f8f8"/><rect x="443" y="336" width="12" height="12" fill="#ffffff"/><rect x="443" y="348" width="12" height="12" fill="#f3f3f3"/><rect x="443" y="360" width="12" height="12" fill="#ebebeb"/><rect x="443" y="372" width="12" height="12" fill="#f5f5f5"/><rect x="443" y="384" width="12" height="12" fill="#ffffff"/><rect x="443" y="396" width="12" height="12" fill="#f7f7f7"/><rect x="443" y="408" width="12" height="12" fill="#ebebeb"/><rect x="443" y="420" width="12" height="12" fill="#f2f2f2"/><rect x="443" y="432" width="12" height="12" fill="#ffffff"/><rect x="443" y="444" width="12" height="12" fill="#fafafa"/><rect x="443" y="456" width="12" height="12" fill="#ebebeb"/><rect x="443" y="468" width="12" height="12" fill="#eeeeee"/><rect x="443" y="480" width="12" height="12" fill="#ffffff"/><rect x="443" y="492" width="12" height="12" fill="#fdfdfd"/><rect x="443" y="504" width="12" height="12" fill="#ebebeb"/><rect x="443" y="516" width="12" height="12" fill="#ebebeb"/><rect x="443" y="528" width="12" height="12" fill="#ffffff"/><rect x="443" y="540" width="12" height="12" fill="#ffffff"/><rect x="443" y="552" width="12" height="12" fill="#ededed"/><rect x="443" y="564" width="12" height="12" fill="#ebebeb"/><rect x="443" y="576" width="12" height="12" fill="#fcfcfc"/><rect x="443" y="588" width="12" height="12" fill="#ffffff"/><rect x="443" y="600" width="12" height="12" fill="#f0f0f0"/><rect x="443" y="612" width="12" height="12" fill="#ebebeb"/><rect x="443" y="624" width="12" height="12" fill="#f8f8f8"/><rect x="443" y="636" width="12" height="12" fill="#ffffff"/><rect x="443" y="648" width="12" height="12" fill="#f3f3f3"/><rect x="443" y="660" width="12" height="12" fill="#ebebeb"/><rect x="443" y="672" width="12" height="12" fill="#f5f5f5"/><rect x="443" y="684" width="12" height="12" fill="#ffffff"/><rect x="443" y="696" width="12" height="12" fill="#f7f7f7"/><rect x="443" y="708" width="12" height="1" fill="#ebebeb"/><rect x="383" y="338" width="12" height="10" fill="#ffffff"/><rect x="383" y="348" width="12" height="12" fill="#f3f3f3"/><rect x="383" y="360" width="12" height="12" fill="#ebebeb"/><rect x="383" y="372" width="12" height="12" fill="#f5f5f5"/><rect x="383" y="384" width="12" height="12" fill="#ffffff"/><rect x="383" y="396" width="12" height="12" fill="#f7f7f7"/><rect x="383" y="408" width="12" height="12" fill="#ebebeb"/><rect x="383" y="420" width="12" height="12" fill="#f2f2f2"/><rect x="383" y="432" width="12" height="12" fill="#ffffff"/><rect x="383" y="444" width="12" height="12" fill="#fafafa"/><rect x="383" y="456" width="12" height="12" fill="#ebebeb"/><rect x="383" y="468" width="12" height="12" fill="#eeeeee"/><rect x="383" y="480" width="12" height="12" fill="#ffffff"/><rect x="383" y="492" width="12" height="12" fill="#fdfdfd"/><rect x="383" y="504" width="12" height="12" fill="#ebebeb"/><rect x="383" y="516" width="12" height="12" fill="#ebebeb"/><rect x="383" y="528" width="12" height="12" fill="#ffffff"/><rect x="383" y="540" width="12" height="12" fill="#ffffff"/><rect x="383" y="552" width="12" height="12" fill="#ededed"/><rect x="383" y="564" width="12" height="12" fill="#ebebeb"/><rect x="383" y="576" width="12" height="12" fill="#fcfcfc"/><rect x="383" y="588" width="12" height="12" fill="#ffffff"/><rect x="383" y="600" width="12" height="12" fill="#f0f0f0"/><rect x="383" y="612" width="12" height="12" fill="#ebebeb"/><rect x="383" y="624" width="12" height="12" fill="#f8f8f8"/><rect x="383" y="636" width="12" height="12" fill="#ffffff"/><rect x="383" y="648" width="12" height="12" fill="#f3f3f3"/><rect x="383" y="660" width="12" height="12" fill="#ebebeb"/><rect x="383" y="672" width="12" height="12" fill="#f5f5f5"/><rect x="383" y="684" width="12" height="12" fill="#ffffff"/><rect x="383" y="696" width="12" height="12" fill="#f7f7f7"/><rect x="383" y="708" width="12" height="1" fill="#ebebeb"/><rect x="659" y="303" width="12" height="9" fill="#e2e3e3"/><rect x="671" y="303" width="12" height="9" fill="#e7e7e7"/><rect x="683" y="303" width="12" height="9" fill="#e1e1e2"/><rect x="695" y="303" width="12" height="9" fill="#ebeae9"/><rect x="707" y="303" width="12" height="9" fill="#e3e4e5"/><rect x="659" y="312" width="12" height="12" fill="#c7c8c8"/><rect x="671" y="312" width="12" height="12" fill="#c5c4c4"/><rect x="683" y="312" width="12" height="12" fill="#bfbfbf"/><rect x="695" y="312" width="12" height="12" fill="#e0dedd"/><rect x="707" y="312" width="12" height="12" fill="#bababc"/><rect x="659" y="324" width="12" height="3" fill="#f6f6f6"/><rect x="671" y="324" width="12" height="3" fill="#f3f3f2"/><rect x="683" y="324" width="12" height="3" fill="#f4f5f5"/><rect x="695" y="324" width="12" height="3" fill="#f8f8f8"/><rect x="707" y="324" width="12" height="3" fill="#f7f7f7"/><rect x="707" y="327" width="12" height="9" fill="#f7f7f7"/><rect x="719" y="327" width="12" height="9" fill="#f8f8f8"/><rect x="707" y="336" width="12" height="12" fill="#c6c4c3"/><rect x="719" y="336" width="12" height="12" fill="#d2d4d5"/><rect x="707" y="348" width="24" height="4" fill="#f3f3f3"/><rect x="674" y="352" width="21" height="8" fill="#f3f3f3"/><rect x="674" y="360" width="9" height="12" fill="#bcbab8"/><rect x="683" y="360" width="12" height="12" fill="#bdc0c3"/><rect x="674" y="372" width="21" height="5" fill="#f5f5f5"/><rect x="707" y="352" width="24" height="8" fill="#f3f3f3"/><rect x="707" y="360" width="12" height="12" fill="#b7b5b4"/><rect x="719" y="360" width="12" height="12" fill="#c2c4c5"/><rect x="707" y="372" width="24" height="5" fill="#f5f5f5"/><rect x="668" y="377" width="63" height="7" fill="#f5f5f5"/><rect x="668" y="384" width="3" height="12" fill="#c5c5c5"/><rect x="671" y="384" width="12" height="12" fill="#cac9c7"/><rect x="683" y="384" width="12" height="12" fill="#ccd0d3"/><rect x="695" y="384" width="12" height="12" fill="#e8e8e7"/><rect x="707" y="384" width="12" height="12" fill="#c5c3c2"/><rect x="719" y="384" width="12" height="12" fill="#d2d4d5"/><rect x="668" y="396" width="63" height="12" fill="#f7f7f7"/><rect x="668" y="408" width="3" height="12" fill="#bbbaba"/><rect x="671" y="408" width="12" height="12" fill="#c1c0be"/><rect x="683" y="408" width="12" height="12" fill="#c5c7ca"/><rect x="695" y="408" width="12" height="12" fill="#d7d6d5"/><rect x="707" y="408" width="12" height="12" fill="#b9b8b6"/><rect x="719" y="408" width="12" height="12" fill="#c4c5c7"/><rect x="668" y="420" width="3" height="12" fill="#eeeeee"/><rect x="671" y="420" width="12" height="12" fill="#ececec"/><rect x="683" y="420" width="12" height="12" fill="#eaebeb"/><rect x="695" y="420" width="12" height="12" fill="#f2f2f2"/><rect x="707" y="420" width="12" height="12" fill="#f0efef"/><rect x="719" y="420" width="12" height="12" fill="#f0f0f0"/><rect x="668" y="432" width="3" height="12" fill="#d7d7d8"/><rect x="671" y="432" width="12" height="12" fill="#cecdcd"/><rect x="683" y="432" width="12" height="12" fill="#cfced0"/><rect x="695" y="432" width="12" height="12" fill="#f7f4f2"/><rect x="707" y="432" width="12" height="12" fill="#cccecf"/><rect x="719" y="432" width="12" height="12" fill="#e6e7e8"/><rect x="668" y="444" width="3" height="12" fill="#ececed"/><rect x="671" y="444" width="12" height="12" fill="#f0f0f0"/><rect x="683" y="444" width="12" height="12" fill="#ededed"/><rect x="695" y="444" width="12" height="12" fill="#f4f4f4"/><rect x="707" y="444" width="12" height="12" fill="#ededed"/><rect x="719" y="444" width="12" height="12" fill="#f0f0f0"/><rect x="668" y="456" width="3" height="12" fill="#c3c2c2"/><rect x="671" y="456" width="12" height="12" fill="#c3c2c1"/><rect x="683" y="456" width="12" height="12" fill="#c9ccce"/><rect x="695" y="456" width="12" height="12" fill="#dededd"/><rect x="707" y="456" width="12" height="12" fill="#c6c5c4"/><rect x="719" y="456" width="12" height="12" fill="#d0d2d3"/><rect x="668" y="468" width="3" height="12" fill="#e3e2e2"/><rect x="671" y="468" width="12" height="12" fill="#e6e6e6"/><rect x="683" y="468" width="12" height="12" fill="#e2e3e3"/><rect x="695" y="468" width="12" height="12" fill="#e7e7e7"/><rect x="707" y="468" width="12" height="12" fill="#dfdede"/><rect x="719" y="468" width="12" height="12" fill="#e0e0e0"/><rect x="668" y="480" width="3" height="12" fill="#d8d8d7"/><rect x="671" y="480" width="12" height="12" fill="#d9d8d6"/><rect x="683" y="480" width="12" height="12" fill="#e1e3e6"/><rect x="695" y="480" width="12" height="12" fill="#f2f2f1"/><rect x="707" y="480" width="12" height="12" fill="#dbd9d8"/><rect x="719" y="480" width="12" height="12" fill="#e6e7e9"/><rect x="668" y="492" width="3" height="12" fill="#ebebea"/><rect x="671" y="492" width="12" height="12" fill="#efefee"/><rect x="683" y="492" width="12" height="12" fill="#e9eaea"/><rect x="695" y="492" width="12" height="12" fill="#f4f3f3"/><rect x="707" y="492" width="12" height="12" fill="#e8e7e7"/><rect x="719" y="492" width="12" height="12" fill="#e9e9e9"/><rect x="668" y="504" width="3" height="12" fill="#d2d2d2"/><rect x="671" y="504" width="12" height="12" fill="#cecece"/><rect x="683" y="504" width="12" height="12" fill="#cccbcd"/><rect x="695" y="504" width="12" height="12" fill="#e6e4e2"/><rect x="707" y="504" width="12" height="12" fill="#cccdce"/><rect x="719" y="504" width="12" height="12" fill="#dcddde"/><rect x="668" y="516" width="3" height="12" fill="#d3d4d4"/><rect x="671" y="516" width="12" height="12" fill="#d2d2d2"/><rect x="683" y="516" width="12" height="12" fill="#d3d3d3"/><rect x="695" y="516" width="12" height="12" fill="#e4e3e3"/><rect x="707" y="516" width="12" height="12" fill="#d0d0d1"/><rect x="719" y="516" width="12" height="12" fill="#dadadb"/><rect x="668" y="528" width="3" height="12" fill="#e8e8e9"/><rect x="671" y="528" width="12" height="12" fill="#e3e3e2"/><rect x="683" y="528" width="12" height="12" fill="#e1e1e2"/><rect x="695" y="528" width="12" height="12" fill="#faf8f7"/><rect x="707" y="528" width="12" height="12" fill="#e3e4e4"/><rect x="719" y="528" width="12" height="12" fill="#eff0f1"/><rect x="668" y="540" width="3" height="12" fill="#e0e0e1"/><rect x="671" y="540" width="12" height="12" fill="#e0dfdf"/><rect x="683" y="540" width="12" height="12" fill="#e0e0e0"/><rect x="695" y="540" width="12" height="12" fill="#f7f6f4"/><rect x="707" y="540" width="12" height="12" fill="#dbdcdd"/><rect x="719" y="540" width="12" height="12" fill="#ececed"/><rect x="668" y="552" width="3" height="1" fill="#dcdddd"/><rect x="671" y="552" width="12" height="1" fill="#dddcdc"/><rect x="683" y="552" width="12" height="1" fill="#d6d5d6"/><rect x="695" y="552" width="12" height="1" fill="#e9e7e6"/><rect x="707" y="552" width="12" height="1" fill="#dcdddd"/><rect x="719" y="552" width="12" height="1" fill="#e5e5e5"/><rect x="731" y="352" width="12" height="8" fill="#f3f3f3"/><rect x="731" y="360" width="12" height="12" fill="#e6e7e7"/><rect x="731" y="372" width="12" height="12" fill="#f5f5f5"/><rect x="731" y="384" width="12" height="12" fill="#fafafb"/><rect x="731" y="396" width="12" height="12" fill="#f7f7f7"/><rect x="731" y="408" width="12" height="12" fill="#e6e7e7"/><rect x="731" y="420" width="12" height="12" fill="#f2f2f2"/><rect x="731" y="432" width="12" height="12" fill="#ffffff"/><rect x="731" y="444" width="12" height="12" fill="#f8f8f8"/><rect x="731" y="456" width="12" height="12" fill="#ebebeb"/><rect x="731" y="468" width="12" height="12" fill="#eaeaeb"/><rect x="731" y="480" width="12" height="12" fill="#ffffff"/><rect x="731" y="492" width="12" height="12" fill="#f8f9f9"/><rect x="731" y="504" width="12" height="12" fill="#ebebeb"/><rect x="731" y="516" width="12" height="12" fill="#e9e9e9"/><rect x="731" y="528" width="12" height="12" fill="#ffffff"/><rect x="731" y="540" width="12" height="12" fill="#fdfdfd"/><rect x="731" y="552" width="12" height="1" fill="#ededed"/><rect x="661" y="553" width="10" height="11" fill="#dcdddd"/><rect x="671" y="553" width="10" height="11" fill="#dddcdc"/><rect x="661" y="564" width="10" height="12" fill="#cacbcb"/><rect x="671" y="564" width="10" height="12" fill="#c6c5c5"/><rect x="661" y="576" width="10" height="2" fill="#ededed"/><rect x="671" y="576" width="10" height="2" fill="#ebeae9"/><rect x="707" y="553" width="12" height="11" fill="#dcdddd"/><rect x="719" y="553" width="12" height="11" fill="#e5e5e5"/><rect x="707" y="564" width="12" height="12" fill="#c2c3c4"/><rect x="719" y="564" width="12" height="12" fill="#d3d4d5"/><rect x="707" y="576" width="12" height="2" fill="#f1f0ef"/><rect x="719" y="576" width="12" height="2" fill="#f4f5f5"/><rect x="661" y="578" width="10" height="10" fill="#ededed"/><rect x="671" y="578" width="10" height="10" fill="#ebeae9"/><rect x="661" y="588" width="10" height="12" fill="#d6d6d6"/><rect x="671" y="588" width="10" height="12" fill="#cfcdcb"/><rect x="661" y="600" width="10" height="3" fill="#e4e5e5"/><rect x="671" y="600" width="10" height="3" fill="#e7e7e7"/><rect x="709" y="578" width="10" height="10" fill="#f1f0ef"/><rect x="719" y="578" width="12" height="10" fill="#f4f5f5"/><rect x="709" y="588" width="10" height="12" fill="#d0cfce"/><rect x="719" y="588" width="12" height="12" fill="#dadbdc"/><rect x="709" y="600" width="10" height="3" fill="#e8e8e9"/><rect x="719" y="600" width="12" height="3" fill="#ececec"/><rect x="651" y="603" width="8" height="9" fill="#eeeeee"/><rect x="659" y="603" width="12" height="9" fill="#e4e5e5"/><rect x="671" y="603" width="10" height="9" fill="#e7e7e7"/><rect x="651" y="612" width="8" height="12" fill="#dcdddd"/><rect x="659" y="612" width="12" height="12" fill="#c6c6c7"/><rect x="671" y="612" width="10" height="12" fill="#bfbebe"/><rect x="651" y="624" width="8" height="12" fill="#f7f8f8"/><rect x="659" y="624" width="12" height="12" fill="#f6f7f7"/><rect x="671" y="624" width="10" height="12" fill="#f8f8f8"/><rect x="651" y="636" width="8" height="12" fill="#eeeeee"/><rect x="659" y="636" width="12" height="12" fill="#cbcbcc"/><rect x="671" y="636" width="10" height="12" fill="#c4c3c3"/><rect x="651" y="648" width="30" height="5" fill="#f3f3f3"/><rect x="657" y="653" width="24" height="7" fill="#f3f3f3"/><rect x="657" y="660" width="2" height="12" fill="#dbdbdc"/><rect x="659" y="660" width="12" height="12" fill="#babbbb"/><rect x="671" y="660" width="10" height="12" fill="#b6b5b4"/><rect x="657" y="672" width="24" height="6" fill="#f5f5f5"/><rect x="707" y="603" width="12" height="9" fill="#e8e8e9"/><rect x="719" y="603" width="12" height="9" fill="#ececec"/><rect x="707" y="612" width="12" height="12" fill="#bababc"/><rect x="719" y="612" width="12" height="12" fill="#cfd0d1"/><rect x="707" y="624" width="12" height="12" fill="#f7f8f8"/><rect x="719" y="624" width="12" height="12" fill="#f7f7f7"/><rect x="707" y="636" width="12" height="12" fill="#c0c1c3"/><rect x="719" y="636" width="12" height="12" fill="#dddee0"/><rect x="707" y="648" width="24" height="12" fill="#f3f3f3"/><rect x="707" y="660" width="12" height="12" fill="#b1b3b4"/><rect x="719" y="660" width="12" height="12" fill="#cbccce"/><rect x="707" y="672" width="24" height="6" fill="#f5f5f5"/><rect x="668" y="678" width="54" height="6" fill="#f5f5f5"/><rect x="668" y="684" width="3" height="12" fill="#c9caca"/><rect x="671" y="684" width="12" height="12" fill="#c4c3c2"/><rect x="683" y="684" width="12" height="12" fill="#c2c2c3"/><rect x="695" y="684" width="12" height="12" fill="#f2efec"/><rect x="707" y="684" width="12" height="12" fill="#bfc1c2"/><rect x="719" y="684" width="3" height="12" fill="#dcddde"/><rect x="668" y="696" width="54" height="12" fill="#f7f7f7"/><rect x="668" y="708" width="54" height="1" fill="#ebebeb"/><rect x="827" y="26" width="12" height="10" fill="#357adb"/><rect x="839" y="26" width="12" height="10" fill="#2f77da"/><rect x="851" y="26" width="12" height="10" fill="#2a73d8"/><rect x="863" y="26" width="1" height="10" fill="#4b88dc"/><rect x="827" y="36" width="12" height="12" fill="#5a92e1"/><rect x="839" y="36" width="12" height="12" fill="#5f95e0"/><rect x="851" y="36" width="12" height="12" fill="#558edc"/><rect x="863" y="36" width="1" height="12" fill="#7ca8e4"/><rect x="974" y="199" width="123" height="5" fill="#8bb9e7"/><rect x="974" y="204" width="9" height="12" fill="#bfbdbd"/><rect x="983" y="204" width="12" height="12" fill="#cbcdd2"/><rect x="995" y="204" width="12" height="12" fill="#e9eaee"/><rect x="1007" y="204" width="12" height="12" fill="#c6c3c3"/><rect x="1019" y="204" width="12" height="12" fill="#cacacf"/><rect x="1031" y="204" width="12" height="12" fill="#cac9cd"/><rect x="1043" y="204" width="12" height="12" fill="#cecdcf"/><rect x="1055" y="204" width="12" height="12" fill="#c8c8cb"/><rect x="1067" y="204" width="12" height="12" fill="#c7c9cf"/><rect x="1079" y="204" width="12" height="12" fill="#e0dfe2"/><rect x="1091" y="204" width="6" height="12" fill="#c6c5c8"/><rect x="974" y="216" width="9" height="12" fill="#dcdbdb"/><rect x="983" y="216" width="12" height="12" fill="#dadbde"/><rect x="995" y="216" width="12" height="12" fill="#dedee0"/><rect x="1007" y="216" width="12" height="12" fill="#d6d4d5"/><rect x="1019" y="216" width="12" height="12" fill="#d6d7da"/><rect x="1031" y="216" width="12" height="12" fill="#d9d9db"/><rect x="1043" y="216" width="12" height="12" fill="#d9d9da"/><rect x="1055" y="216" width="12" height="12" fill="#d7d7da"/><rect x="1067" y="216" width="12" height="12" fill="#d9dadc"/><rect x="1079" y="216" width="12" height="12" fill="#dbdbdd"/><rect x="1091" y="216" width="6" height="12" fill="#d4d4d7"/></svg>
<svg class="abs" style="left:0;top:0;pointer-events:none" width="1328" height="709" viewBox="0 0 1328 709">
<g fill="none" stroke="#e8212a" stroke-width="3.2" stroke-linejoin="round" stroke-linecap="round">
<rect x="239.6" y="110.3" width="142.4" height="44.7" rx="2"/>
<rect x="287.8" y="168.4" width="150.7" height="27.6" rx="2"/>
<path d="M341 231 C350 238 380 236.5 420 236.5 C450 236.5 478 235 492 228"/>
<rect x="840.3" y="197.9" width="375.2" height="24.3" rx="2"/>
<path d="M1061 253.3 L1075 255 L1100 255.8 L1120 255.8 L1161.5 256.3" stroke-width="3.4"/>
<rect x="1069.7" y="257.6" width="31" height="21.6" rx="2" stroke-width="3.1"/>
</g>
<polygon points="1094.9,282 1103.7,287 1100.5,288 1102.8,295.9 1094.6,291.6" fill="#e8212a"/>
<text x="1081" y="324" font-family="Liberation Sans, Noto Sans CJK SC, sans-serif" font-size="21" fill="#ea2a2a">点击展开</text>
</svg>
</body></html>
